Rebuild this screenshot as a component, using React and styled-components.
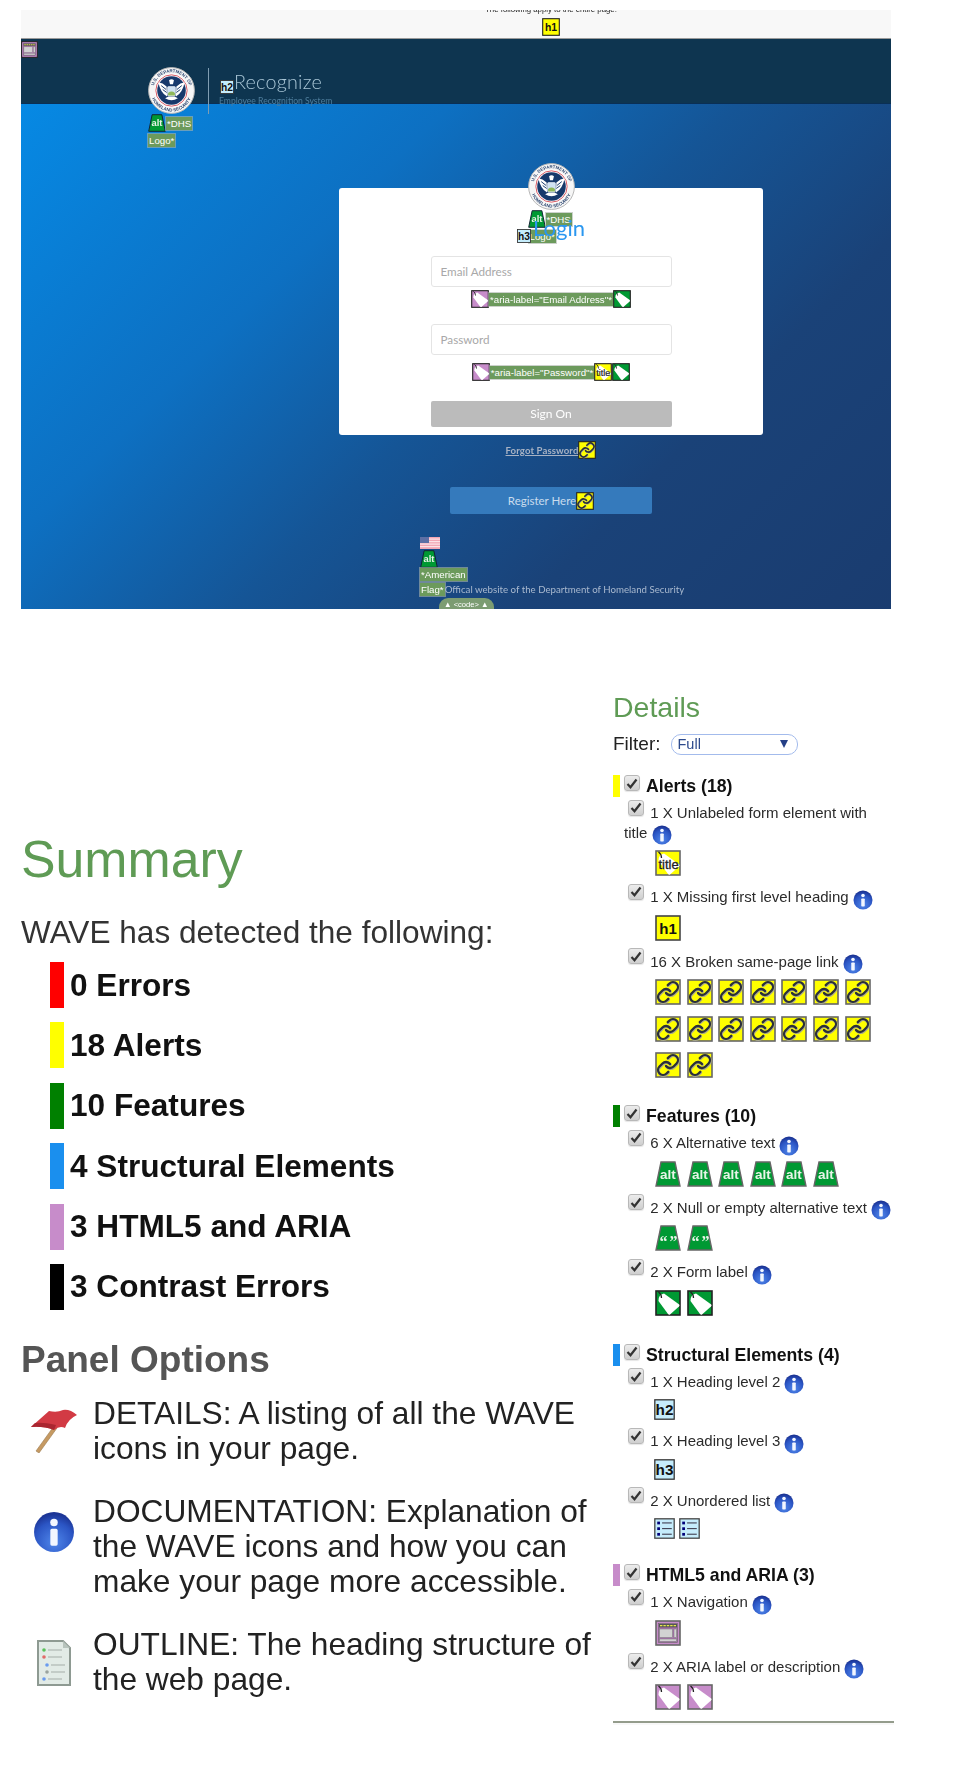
import React from "react";
import styled, { createGlobalStyle } from "styled-components";

const GlobalStyle = createGlobalStyle`
  html, body {
    margin: 0;
    padding: 0;
    background: #fff;
    font-family: "Liberation Sans", Arial, sans-serif;
  }
`;

const Page = styled.div`
  width: 976px;
  min-height: 1780px;
  overflow: hidden;
  filter: blur(0.35px);
`;

/* top half: the page under test, with WAVE annotations */
const Shot = styled.section`
  width: 870px;
  height: 599px;
  margin: 10px 0 0 21px;
  overflow: hidden;
  font-family: Lato, "Open Sans", sans-serif;
`;

const NoticeBar = styled.div`
  height: 28px;
  padding-left: 190px;
  background: #f8f8f8;
  border-bottom: 1px solid #9a9a9a;
  display: flex;
  flex-direction: column;
  align-items: center;
  gap: 2px;
  overflow: hidden;
`;

const NoticeText = styled.div`
  font: 7.8px/12px "Liberation Sans", Arial, sans-serif;
  color: #222;
  margin-top: -6px;
  height: 12px;
`;

const Header = styled.header`
  position: relative;
  height: 64px;
  padding-left: 127px;
  background: #0e3550;
  border-bottom: 1px solid #0a2f55;
  display: flex;
  align-items: flex-start;
`;

const NavBadge = styled.div`
  position: absolute;
  left: 0;
  top: 2px;
`;

const SealColumn = styled.div`
  width: 48px;
  margin-top: 28px;
  position: relative;
  z-index: 1;
`;

const Divider = styled.div`
  width: 1px;
  height: 46px;
  margin: 29px 11px 0 12px;
  background: #7f9db2;
`;

const Brand = styled.div`
  margin-top: 30px;
  position: relative;
  z-index: 1;
`;

const BrandTitle = styled.div`
  display: flex;
  align-items: flex-end;
  font-size: 19.8px;
  font-weight: 300;
  line-height: 25px;
  color: #a9c6d6;
  letter-spacing: 0.2px;
`;

const BrandSub = styled.div`
  font-size: 8.6px;
  line-height: 12px;
  margin-top: 1px;
  margin-left: -1px;
  color: #4e7d9c;
  white-space: nowrap;
`;

const Stage = styled.div`
  height: 506px;
  padding: 59px 0 0 190px;
  background: linear-gradient(135deg, #0689e4 0%, #0d70c2 30%, #155596 50%, #1a4278 70%, #1a3b6e 100%);
  display: flex;
  flex-direction: column;
  align-items: center;
`;

const Card = styled.div`
  width: 424px;
  margin-top: 25px;
  padding-bottom: 8px;
  background: #fff;
  border-radius: 3px;
  display: flex;
  flex-direction: column;
  align-items: center;
`;

const SealCluster = styled.div`
  width: 47px;
  margin-top: -25px;
`;

const Caption = styled.div`
  width: 60px;
  display: flex;
  flex-wrap: wrap;
  align-items: center;
`;

const SrcLabel = styled.span`
  display: inline-block;
  padding: 0 1px;
  background: #6c9a5c;
  outline: 1px solid rgba(170, 180, 170, 0.6);
  color: #fff;
  font: 9.7px/13px "Liberation Sans", Arial, sans-serif;
  white-space: nowrap;
  margin-left: ${(p) => p.$indent || 0}px;
  margin-top: ${(p) => p.$top || 0}px;
`;

const LoginHeading = styled.h3`
  height: 29px;
  margin: -29px 0 0;
  display: flex;
  align-items: flex-end;
  font-size: 22px;
  font-weight: 400;
  line-height: 29px;
  color: #2a97f0;
  position: relative;
`;

const LoginWord = styled.span`
  margin-left: 2px;
  transform: translateY(-1px);
`;

const Field = styled.div`
  width: 241px;
  height: 31px;
  box-sizing: border-box;
  margin-top: ${(p) => p.$top}px;
  padding-left: 9px;
  border: 1px solid #e4e4e4;
  border-radius: 3px;
  color: #a8a8a8;
  font-size: 11.7px;
  line-height: 29px;
  background: #fff;
`;

const AnnotationRow = styled.div`
  height: 18px;
  margin-top: ${(p) => p.$top}px;
  display: flex;
  align-items: center;
`;

const SignOn = styled.div`
  width: 241px;
  height: 26px;
  margin-top: 20px;
  background: #bbbbbb;
  border-radius: 2px;
  color: #fff;
  text-align: center;
  font-size: 12px;
  line-height: 26px;
`;

const ForgotRow = styled.div`
  margin-top: 6px;
  display: flex;
  align-items: center;
  height: 18px;
`;

const ForgotLink = styled.a`
  font-size: 9.6px;
  font-weight: 700;
  color: #a7b2c4;
  text-decoration: underline;
  letter-spacing: 0.1px;
`;

const RegisterButton = styled.div`
  width: 202px;
  height: 27px;
  margin-top: 28px;
  background: #357abc;
  border-radius: 2px;
  color: #c9dcee;
  font-size: 11.5px;
  display: flex;
  align-items: center;
  justify-content: center;
`;

const SiteNote = styled.div`
  width: 262px;
  margin-top: 23px;
  color: #a9b9cf;
  font-size: 9.7px;
`;

const NoteLine = styled.div`
  display: flex;
  align-items: flex-end;
  white-space: nowrap;
  margin-left: ${(p) => p.$indent || 0}px;
  margin-top: ${(p) => p.$top || 0}px;
  line-height: 14px;
`;

const CodePill = styled.div`
  display: inline-block;
  height: 16px;
  margin: 2px 0 0 19px;
  padding: 0 5px;
  border-radius: 9px 9px 0 0;
  background: #7c9c72;
  color: #fff;
  font: 7.6px/13px "Liberation Sans", Arial, sans-serif;
`;

/* bottom half: WAVE panels */
const Panels = styled.div`
  display: flex;
  align-items: flex-start;
`;

const SummaryColumn = styled.div`
  width: 613px;
  padding: 221px 0 0 21px;
  box-sizing: border-box;
`;

const SummaryTitle = styled.h2`
  margin: 0;
  font-size: 51.8px;
  font-weight: 400;
  line-height: 58px;
  color: #5f9b55;
`;

const Detected = styled.p`
  margin: 26px 0 12px;
  font-size: 31.6px;
  line-height: 36px;
  color: #333;
  white-space: nowrap;
`;

const CountList = styled.div`
  display: flex;
  flex-direction: column;
  gap: 14.4px;
  padding-left: 29px;
`;

const CountRow = styled.div`
  display: flex;
  align-items: center;
  gap: 6px;
  font-size: 31.6px;
  font-weight: 700;
  color: #111;
  height: 46px;
`;

const CountBar = styled.span`
  width: 14px;
  height: 46px;
  background: ${(p) => p.$color};
`;

const OptionsTitle = styled.h2`
  margin: 31px 0 17px;
  font-size: 37px;
  line-height: 38px;
  font-weight: 700;
  color: #555;
`;

const OptionList = styled.div`
  display: flex;
  flex-direction: column;
  gap: 28px;
`;

const Option = styled.div`
  display: flex;
  align-items: flex-start;
`;

const OptionIcon = styled.div`
  width: 72px;
  padding: ${(p) => p.$top}px 6px 0 0;
  box-sizing: border-box;
  display: flex;
  justify-content: center;
  flex-shrink: 0;
`;

const OptionText = styled.div`
  width: 500px;
  font-size: 31.7px;
  line-height: 35px;
  color: #222;
`;

const DetailsColumn = styled.div`
  width: 283px;
  padding-top: 82px;
`;

const DetailsTitle = styled.h2`
  margin: 0;
  font-size: 28.5px;
  font-weight: 400;
  line-height: 32px;
  color: #5f9b55;
`;

const FilterRow = styled.div`
  display: flex;
  align-items: center;
  gap: 10px;
  margin-top: 10px;
  font-size: 19px;
  color: #222;
`;

const FilterSelect = styled.div`
  width: 127px;
  height: 21px;
  box-sizing: border-box;
  padding: 0 9px 0 6px;
  border: 1px solid #a3bbec;
  border-radius: 10px;
  font-size: 14.5px;
  line-height: 19px;
  color: #2d4a8c;
  display: flex;
  justify-content: space-between;
  align-items: center;
`;

const Caret = styled.span`
  width: 0;
  height: 0;
  border-left: 4.5px solid transparent;
  border-right: 4.5px solid transparent;
  border-top: 8px solid #243f86;
`;

const Group = styled.div`
  margin-top: ${(p) => p.$top}px;
`;

const GroupHead = styled.div`
  display: flex;
  align-items: flex-start;
  height: 22px;
`;

const GroupBar = styled.span`
  width: 7px;
  height: 22px;
  background: ${(p) => p.$color};
`;

const GroupName = styled.span`
  margin-left: 6px;
  font-size: 17.7px;
  font-weight: 700;
  line-height: 23px;
  color: #111;
  white-space: nowrap;
`;

const CheckBox = styled.span`
  display: inline-flex;
  align-items: center;
  justify-content: center;
  width: 16px;
  height: 16px;
  box-sizing: border-box;
  border: 1px solid #b8b8b8;
  border-radius: 3px;
  background: linear-gradient(#ececec, #cfcfcf);
  box-shadow: 0 1px 1px rgba(0, 0, 0, 0.1);
  margin-left: 4px;
  flex-shrink: 0;
`;

const ItemBox = styled(CheckBox)`
  margin: -5px 2px -5px 4px;
  vertical-align: 5px;
`;

const Item = styled.div`
  margin-top: ${(p) => (p.$first ? 6 : 11)}px;
  padding-left: 11px;
`;

const ItemText = styled.div`
  max-width: ${(p) => (p.$narrow ? "255px" : "none")};
  font-size: 15px;
  line-height: 19.5px;
  color: #2b2b2b;
`;

const InfoWrap = styled.span`
  display: inline-block;
  width: 20px;
  height: 20px;
  margin: -5px 0;
  vertical-align: -2.5px;
`;

const IconRow = styled.div`
  display: flex;
  flex-wrap: wrap;
  gap: 10.7px 5.6px;
  width: 226px;
  margin: ${(p) => (p.$small ? "8px 0 0 30px" : "8px 0 0 31px")};
  ${(p) => p.$small && "column-gap: 4px;"}
`;

const ClosingRule = styled.div`
  width: 281px;
  height: 2px;
  margin-top: 11px;
  background: #949c8c;
  border-bottom: 2px solid #f8f8f8;
`;

const Svg = styled.svg`
  display: block;
  flex-shrink: 0;
`;

const SquareText = styled.text`
  font-family: "Liberation Sans", Arial, sans-serif;
  font-weight: 700;
  text-anchor: middle;
`;

const QuoteText = styled(SquareText)`
  font-family: "Liberation Serif", serif;
  letter-spacing: -1px;
`;

const TitleText = styled(SquareText)`
  font-weight: 400;
  stroke: #222;
  stroke-width: 0.3px;
`;

const Square = ({ size, bg, stroke = "#666", children }) => (
  <Svg width={size} height={size} viewBox="0 0 26 26">
    <rect x="1" y="1" width="24" height="24" fill={bg} stroke={stroke} strokeWidth="1.6" />
    {children}
  </Svg>
);

const TagShape = () => (
  <>
    <path d="M9 3.5 L24.2 14.5 Q25 15.5 24 16.5 L15 24.4 Q14 25 13 24 L3.5 11 Q3 5 9 3.5Z" fill="#fff" />
    <path d="M3.5 2 Q6.5 4 6.5 8" fill="none" stroke="#222" strokeWidth="1.3" />
  </>
);

const chainHooks = [
  "M10 13a5 5 0 0 0 7.54.54l3-3a5 5 0 0 0-7.07-7.07l-1.72 1.71",
  "M14 11a5 5 0 0 0-7.54-.54l-3 3a5 5 0 0 0 7.07 7.07l1.71-1.71",
];

const LinkIcon = ({ size = 26, stroke }) => (
  <Square size={size} bg="#ffff00" stroke={stroke}>
    <g fill="none" strokeLinecap="round" transform="translate(1 1)">
      {chainHooks.map((d) => (
        <path key={d} d={d} stroke="#a8a890" strokeWidth="2.8" transform="translate(0.5 0.7)" />
      ))}
      {chainHooks.map((d) => (
        <path key={d} d={d} stroke="#2b3038" strokeWidth="2.3" />
      ))}
    </g>
  </Square>
);

const TrapIcon = ({ size = 26, stroke = "#666", children }) => (
  <Svg width={size} height={size} viewBox="0 0 26 26">
    <polygon points="6,1 20,1 25,25 1,25" fill="#009933" stroke={stroke} strokeWidth="1.4" />
    {children}
  </Svg>
);

const AltIcon = ({ size, stroke }) => (
  <TrapIcon size={size} stroke={stroke}>
    <SquareText x="13" y="18" fontSize="13.5" fill="#e8f4e8">alt</SquareText>
  </TrapIcon>
);

const NullAltIcon = () => (
  <TrapIcon>
    <QuoteText x="13" y="22" fontSize="16" fill="#e8f4e8">“ ”</QuoteText>
  </TrapIcon>
);

const LabelIcon = ({ size = 26, stroke = "#222" }) => (
  <Square size={size} bg="#009933" stroke={stroke}>
    <TagShape />
  </Square>
);

const AriaIcon = ({ size = 26, stroke = "#666" }) => (
  <Square size={size} bg="#c78cca" stroke={stroke}>
    <TagShape />
  </Square>
);

const TitleIcon = ({ size = 26, stroke }) => (
  <Square size={size} bg="#ffff00" stroke={stroke}>
    <TagShape />
    <TitleText x="13.5" y="19" fontSize="13" fill="#222">title</TitleText>
  </Square>
);

const H1Icon = ({ size = 26, stroke = "#444" }) => (
  <Square size={size} bg="#ffff00" stroke={stroke}>
    <SquareText x="13" y="19" fontSize="15" fill="#111">h1</SquareText>
  </Square>
);

const HeadingIcon = ({ level, size = 21 }) => (
  <Square size={size} bg="#c5ecfb" stroke="#333">
    <SquareText x="13" y="20" fontSize="19" fill="#111">h{level}</SquareText>
  </Square>
);

const ListIcon = ({ size = 21 }) => (
  <Square size={size} bg="#c5ecfb" stroke="#444">
    {[6, 13, 20].map((y) => (
      <g key={y}>
        <rect x="4" y={y - 1.5} width="3.4" height="3.4" fill="#00007a" />
        <rect x="10" y={y - 0.6} width="12" height="1.4" fill="#445" />
      </g>
    ))}
  </Square>
);

const NavIcon = ({ size = 26, stroke = "#666" }) => (
  <Square size={size} bg="#c78cca" stroke={stroke}>
    <rect x="3.5" y="3.5" width="19" height="19" fill="#a96fae" stroke="#666" strokeWidth="0.6" />
    <rect x="4" y="4" width="18" height="3.4" fill="#555" />
    <path d="M5 5.7 H21" stroke="#e8e84a" strokeWidth="1.3" strokeDasharray="2.4 1" />
    <rect x="4.5" y="9" width="13" height="8.5" fill="#d2d2d2" stroke="#777" strokeWidth="0.5" />
    <rect x="19" y="9" width="2.6" height="8.5" fill="#d2d2d2" stroke="#777" strokeWidth="0.5" />
    <rect x="4.5" y="19" width="17" height="2.4" fill="#d2d2d2" stroke="#777" strokeWidth="0.5" />
  </Square>
);

const InfoIcon = ({ size = 20 }) => (
  <Svg width={size} height={size} viewBox="0 0 40 40">
    <defs>
      <radialGradient id="infoFill" cx="50%" cy="75%" r="70%">
        <stop offset="0%" stopColor="#4f86ea" />
        <stop offset="70%" stopColor="#2b55c4" />
        <stop offset="100%" stopColor="#1c3596" />
      </radialGradient>
    </defs>
    <circle cx="20" cy="20" r="19" fill="url(#infoFill)" />
    <circle cx="20" cy="11" r="3.6" fill="#f2f6ff" />
    <rect x="16.5" y="17" width="7" height="16" rx="1.5" fill="#f2f6ff" />
  </Svg>
);

const Seal = ({ arc }) => (
  <Svg width="47" height="47" viewBox="0 0 48 48">
    <defs>
      <path id={`${arc}Top`} d="M5.4 24 a18.6 18.6 0 0 1 37.2 0" />
      <path id={`${arc}Bottom`} d="M2.6 24 a21.4 21.4 0 0 0 42.8 0" />
    </defs>
    <circle cx="24" cy="24" r="23.4" fill="#f6f6f6" stroke="#b5b5b5" strokeWidth="1" />
    <text fontSize="4.5" fontWeight="700" fill="#2c4670" fontFamily="Liberation Sans, Arial, sans-serif" textAnchor="middle">
      <textPath href={`#${arc}Top`} startOffset="50%">U.S. DEPARTMENT OF</textPath>
    </text>
    <text fontSize="4.5" fontWeight="700" fill="#2c4670" fontFamily="Liberation Sans, Arial, sans-serif" textAnchor="middle">
      <textPath href={`#${arc}Bottom`} startOffset="50%">HOMELAND SECURITY</textPath>
    </text>
    <circle cx="24" cy="24" r="17" fill="#fff" />
    <circle cx="24" cy="24" r="16" fill="none" stroke="#d2424c" strokeWidth="0.9" />
    <circle cx="24" cy="24" r="14.6" fill="#17396b" />
    <path d="M10.5 15.5 Q15 16 19 20 L19.5 30 Q13 27 10.5 15.5Z M37.5 15.5 Q33 16 29 20 L28.5 30 Q35 27 37.5 15.5Z" fill="#fff" />
    <path d="M13.5 19 L18.5 23 M15 23 L19 26 M34.5 19 L29.5 23 M33 23 L29 26" stroke="#17396b" strokeWidth="1" />
    <path d="M21.5 13.5 Q24 11.5 26.5 13.5 L25.5 17.5 H22.5Z" fill="#fff" />
    <rect x="20" y="20" width="8" height="9.5" rx="1" fill="#cfe2f3" stroke="#fff" strokeWidth="0.6" />
    <path d="M20.5 26.5 Q24 23.5 27.5 26.5 V29 H20.5Z" fill="#8fb85a" />
    <path d="M17.5 32 Q24 36 30.5 32 L27 30 H21Z" fill="#fff" />
  </Svg>
);

const UsFlag = () => (
  <Svg width="20" height="12" viewBox="0 0 20 12">
    <rect width="20" height="12" fill="#f3a6b4" />
    {[1.5, 4, 6.5, 9].map((y) => (
      <rect key={y} y={y} width="20" height="1.2" fill="#fbe3e7" />
    ))}
    <rect width="9" height="6" fill="#5d6fa5" />
  </Svg>
);

const RedFlag = () => (
  <Svg width="48" height="46" viewBox="0 0 48 46">
    <path d="M6 44 L24 19 L27 21 L9 46Z" fill="#c69a62" stroke="#9a7a50" strokeWidth="0.6" />
    <path d="M1 20 L19 4 Q27 6 33 3 Q40 2 47 8 Q38 12 35 21 Q30 18 24 23 Q14 19 1 20Z" fill="#d23a44" />
    <path d="M1 20 Q14 19 24 23 L26 18 Q13 15 5 16Z" fill="#a92630" />
  </Svg>
);

const OutlineDoc = () => (
  <Svg width="36" height="48" viewBox="0 0 36 48">
    <path d="M2 2 H27 L34 9 V46 H2Z" fill="#e2ebe6" stroke="#8e9a92" strokeWidth="2" />
    <path d="M27 2 V9 H34Z" fill="#b8c4bd" />
    {[
      [11, "#5cc25c"],
      [18, "#e26a6a"],
      [26, "#6a9bee"],
      [33, "#9aa39e"],
      [40, "#6a9bee"],
    ].map(([y, c], i) => (
      <g key={y}>
        <circle cx={i === 2 || i === 3 ? 11 : 8} cy={y} r="1.8" fill={c} />
        <rect x={i === 2 || i === 3 ? 15 : 12} y={y - 1} width="14" height="2" fill="#c3ccc7" />
      </g>
    ))}
  </Svg>
);

const Check = () => (
  <svg width="12" height="11" viewBox="0 0 12 11">
    <path d="M1.5 6 L4.5 9.2 L10.5 1.5" fill="none" stroke="#333" strokeWidth="2.2" />
  </svg>
);

const repeat = (n, node) => Array.from({ length: n }, (_, i) => React.cloneElement(node, { key: i }));

const counts = [
  { color: "#ff0000", text: "0 Errors" },
  { color: "#ffff00", text: "18 Alerts" },
  { color: "#008000", text: "10 Features" },
  { color: "#1a8fee", text: "4 Structural Elements" },
  { color: "#c78cca", text: "3 HTML5 and ARIA" },
  { color: "#000000", text: "3 Contrast Errors" },
];

const options = [
  { icon: <RedFlag />, top: 11, text: "DETAILS: A listing of all the WAVE icons in your page." },
  { icon: <InfoIcon size={42} />, top: 17, text: "DOCUMENTATION: Explanation of the WAVE icons and how you can make your page more accessible." },
  { icon: <OutlineDoc />, top: 12, text: "OUTLINE: The heading structure of the web page." },
];

const groups = [
  {
    name: "Alerts (18)",
    color: "#ffff00",
    top: 20,
    items: [
      { text: "1 X Unlabeled form element with title", narrow: true, icons: [<TitleIcon key="t" />] },
      { text: "1 X Missing first level heading", icons: [<H1Icon key="h" />] },
      { text: "16 X Broken same-page link", icons: repeat(16, <LinkIcon />) },
    ],
  },
  {
    name: "Features (10)",
    color: "#008000",
    top: 27,
    items: [
      { text: "6 X Alternative text", icons: repeat(6, <AltIcon />) },
      { text: "2 X Null or empty alternative text", icons: repeat(2, <NullAltIcon />) },
      { text: "2 X Form label", icons: repeat(2, <LabelIcon />) },
    ],
  },
  {
    name: "Structural Elements (4)",
    color: "#1a8fee",
    top: 28,
    items: [
      { text: "1 X Heading level 2", small: true, icons: [<HeadingIcon key="2" level={2} />] },
      { text: "1 X Heading level 3", small: true, icons: [<HeadingIcon key="3" level={3} />] },
      { text: "2 X Unordered list", small: true, icons: repeat(2, <ListIcon />) },
    ],
  },
  {
    name: "HTML5 and ARIA (3)",
    color: "#c78cca",
    top: 25,
    items: [
      { text: "1 X Navigation", icons: [<NavIcon key="n" />] },
      { text: "2 X ARIA label or description", icons: repeat(2, <AriaIcon />) },
    ],
  },
];

const App = () => (
  <Page>
    <GlobalStyle />
    <Shot>
      <NoticeBar>
        <NoticeText>The following apply to the entire page:</NoticeText>
        <H1Icon size={18} stroke="#222" />
      </NoticeBar>
      <Header>
        <NavBadge>
          <NavIcon size={17} stroke="#222" />
        </NavBadge>
        <SealColumn>
          <Seal arc="sealArcHeader" />
          <Caption>
            <AltIcon size={18} stroke="#123" />
            <SrcLabel>*DHS</SrcLabel>
            <SrcLabel $top={2}>Logo*</SrcLabel>
          </Caption>
        </SealColumn>
        <Divider />
        <Brand>
          <BrandTitle>
            <HeadingIcon level={2} size={14} />
            Recognize
          </BrandTitle>
          <BrandSub>Employee Recognition System</BrandSub>
        </Brand>
      </Header>
      <Stage>
        <Card>
          <SealCluster>
            <Seal arc="sealArcCard" />
            <Caption>
              <AltIcon size={18} stroke="#123" />
              <SrcLabel>*DHS</SrcLabel>
              <SrcLabel $top={2} $indent={1}>Logo*</SrcLabel>
            </Caption>
          </SealCluster>
          <LoginHeading>
            <HeadingIcon level={3} size={14} />
            <LoginWord>Login</LoginWord>
          </LoginHeading>
          <Field $top={13}>Email Address</Field>
          <AnnotationRow $top={3}>
            <AriaIcon size={18} stroke="#222" />
            <SrcLabel>*aria-label="Email Address"*</SrcLabel>
            <LabelIcon size={18} />
          </AnnotationRow>
          <Field $top={16}>Password</Field>
          <AnnotationRow $top={8}>
            <AriaIcon size={18} stroke="#222" />
            <SrcLabel>*aria-label="Password"*</SrcLabel>
            <TitleIcon size={18} stroke="#222" />
            <LabelIcon size={18} />
          </AnnotationRow>
          <SignOn>Sign On</SignOn>
        </Card>
        <ForgotRow>
          <ForgotLink>Forgot Password</ForgotLink>
          <LinkIcon size={18} stroke="#222" />
        </ForgotRow>
        <RegisterButton>
          Register Here
          <LinkIcon size={18} stroke="#222" />
        </RegisterButton>
        <SiteNote>
          <UsFlag />
          <NoteLine $top={1}>
            <AltIcon size={18} stroke="#123" />
          </NoteLine>
          <NoteLine>
            <SrcLabel>*American</SrcLabel>
          </NoteLine>
          <NoteLine $top={1}>
            <SrcLabel>Flag*</SrcLabel>
            Offical website of the Department of Homeland Security
          </NoteLine>
          <CodePill>▲ &lt;code&gt; ▲</CodePill>
        </SiteNote>
      </Stage>
    </Shot>
    <Panels>
      <SummaryColumn>
        <SummaryTitle>Summary</SummaryTitle>
        <Detected>WAVE has detected the following:</Detected>
        <CountList>
          {counts.map((c) => (
            <CountRow key={c.text}>
              <CountBar $color={c.color} />
              {c.text}
            </CountRow>
          ))}
        </CountList>
        <OptionsTitle>Panel Options</OptionsTitle>
        <OptionList>
          {options.map((o) => (
            <Option key={o.text}>
              <OptionIcon $top={o.top}>{o.icon}</OptionIcon>
              <OptionText>{o.text}</OptionText>
            </Option>
          ))}
        </OptionList>
      </SummaryColumn>
      <DetailsColumn>
        <DetailsTitle>Details</DetailsTitle>
        <FilterRow>
          Filter:
          <FilterSelect>
            Full
            <Caret />
          </FilterSelect>
        </FilterRow>
        {groups.map((g) => (
          <Group key={g.name} $top={g.top}>
            <GroupHead>
              <GroupBar $color={g.color} />
              <CheckBox><Check /></CheckBox>
              <GroupName>{g.name}</GroupName>
            </GroupHead>
            {g.items.map((item, i) => (
              <Item key={item.text} $first={i === 0}>
                <ItemText $narrow={item.narrow}>
                  <ItemBox><Check /></ItemBox> {item.text} <InfoWrap><InfoIcon /></InfoWrap>
                </ItemText>
                <IconRow $small={item.small}>{item.icons}</IconRow>
              </Item>
            ))}
          </Group>
        ))}
        <ClosingRule />
      </DetailsColumn>
    </Panels>
  </Page>
);

export default App;
